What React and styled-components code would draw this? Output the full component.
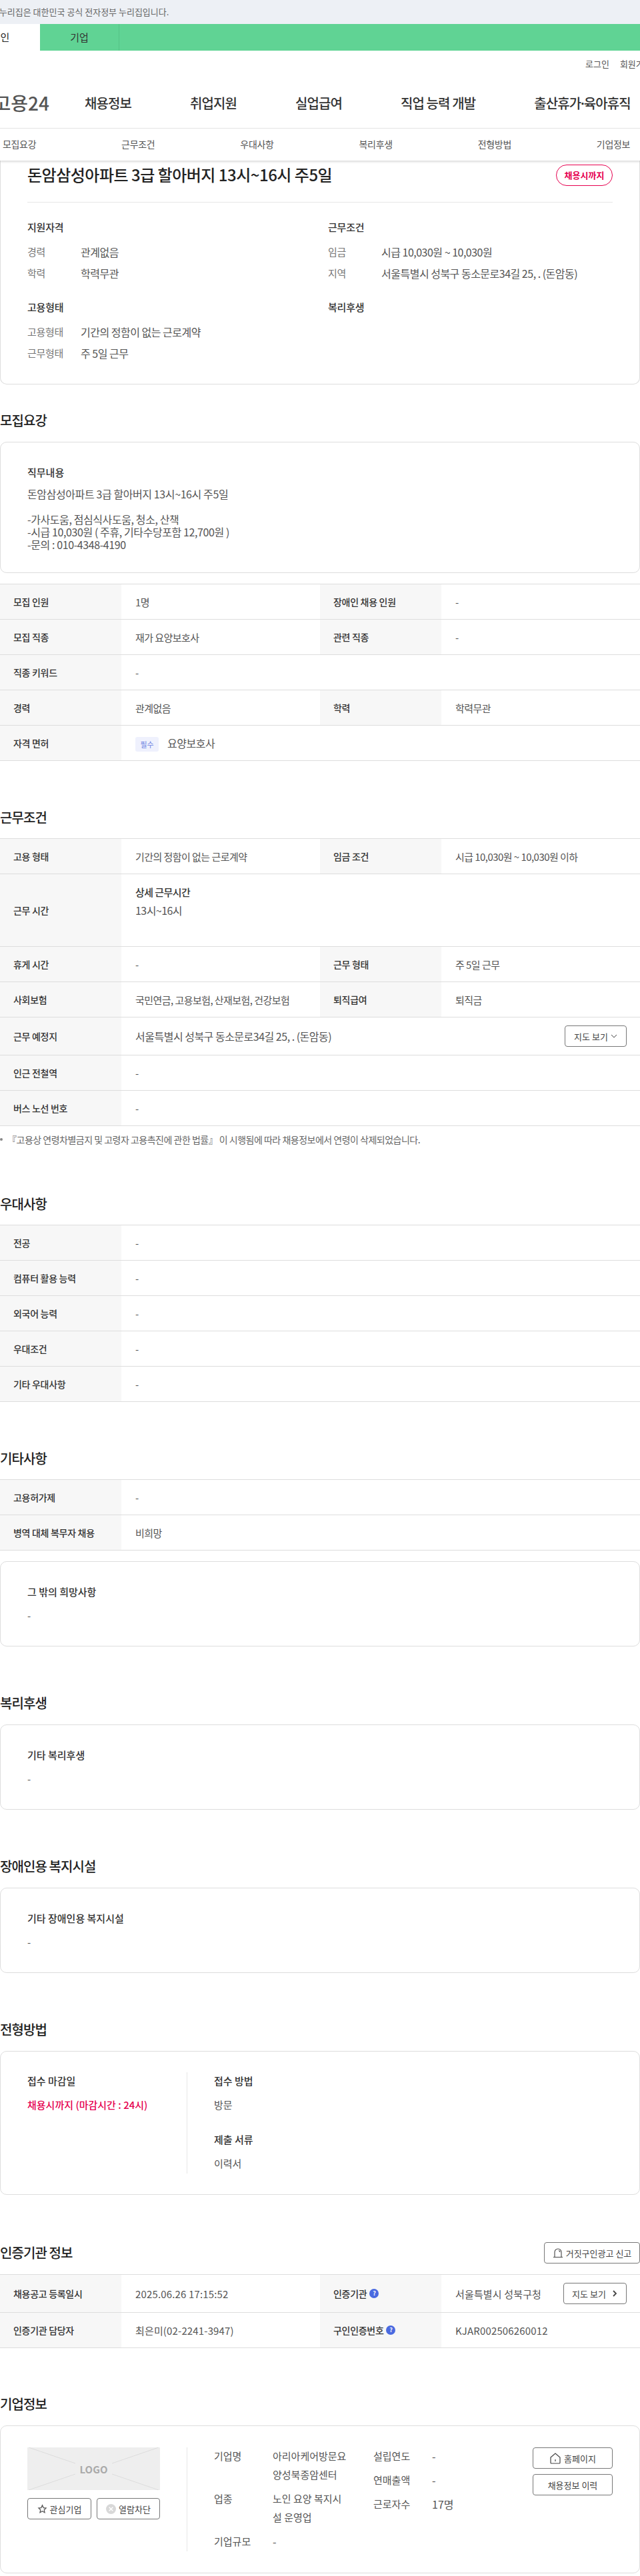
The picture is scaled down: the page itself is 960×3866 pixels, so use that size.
import React from "react";
import styled, { createGlobalStyle } from "styled-components";

const GlobalStyle = createGlobalStyle`
  html, body { margin: 0; padding: 0; background: #fff; }
  body {
    width: 960px;
    overflow-x: hidden;
    font-family: "Noto Sans CJK KR", "Noto Sans", sans-serif;
    font-size: 15px;
    color: #555;
  }
  * { box-sizing: border-box; }
`;

const Page = styled.div`
  width: 960px;
  height: 3866px;
  overflow: hidden;
`;

const GovBar = styled.div`
  height: 36px;
  line-height: 35px;
  background: #edf0f5;
  color: #666;
  font-size: 13px;
  white-space: nowrap;
  span { margin-left: -16px; }
`;

const TypeTabs = styled.div`
  display: flex;
  height: 40px;
  background: #60d394;
`;

const TypeTab = styled.div`
  flex: 0 0 119px;
  margin-left: ${(p) => (p.$active ? "-59px" : "0")};
  line-height: 40px;
  font-size: 15px;
  text-align: center;
  color: ${(p) => (p.$active ? "#222" : "#333")};
  background: ${(p) => (p.$active ? "#fff" : "transparent")};
  border-right: ${(p) => (p.$active ? "0" : "1px solid #55c486")};
`;

const UtilRow = styled.div`
  display: flex;
  gap: 16px;
  height: 40px;
  padding-left: 878px;
  line-height: 40px;
  font-size: 13px;
  white-space: nowrap;
`;

const MainNav = styled.div`
  display: flex;
  align-items: center;
  gap: 88px;
  height: 76px;
  white-space: nowrap;
`;

const Logo = styled.div`
  display: flex;
  justify-content: flex-end;
  flex: 0 0 74px;
  margin-right: -35px;
  overflow: hidden;
  font-size: 28px;
  font-weight: 500;
  color: #555;
`;

const MainLink = styled.a`
  font-size: 20px;
  font-weight: 500;
  color: #333;
  letter-spacing: -0.9px;
`;

const MidDot = styled.span`
  margin: 0 -3px;
`;

const TabShadow = styled.div`
  position: relative;
  z-index: 2;
  box-shadow: 0 2px 3px rgba(0, 0, 0, 0.14);
`;

const TabBar = styled.div`
  display: grid;
  grid-template-columns: repeat(6, 178.2px);
  width: 1070px;
  height: 49px;
  margin-left: -60px;
  background: #fff;
  border-top: 1px solid #e4e4e4;
`;

const TabLink = styled.a`
  line-height: 47px;
  text-align: center;
  font-size: 14px;
  letter-spacing: -0.3px;
  color: #555;
`;

const Card = styled.div`
  border: 1px solid #ddd;
  border-radius: 10px;
  padding: ${(p) => p.$pad || "35px 40px"};
  background: #fff;
  margin-top: ${(p) => p.$mt || "0"};
`;

const SummaryCard = styled(Card)`
  border-top: 0;
  border-radius: 0 0 10px 10px;
  padding: 6px 40px 30px;
`;

const TitleRow = styled.div`
  display: flex;
  justify-content: space-between;
  align-items: flex-start;
  padding-bottom: 24px;
  border-bottom: 1px solid #e6e6e6;
`;

const JobTitle = styled.h1`
  margin: -1px 0 0;
  font-size: 24px;
  line-height: 32px;
  font-weight: 500;
  color: #222;
  letter-spacing: -0.5px;
`;

const StatusBadge = styled.span`
  width: 85px;
  height: 32px;
  line-height: 29px;
  text-align: center;
  border: 1px solid #e6004f;
  border-radius: 16px;
  color: #e6004f;
  font-weight: 700;
  font-size: 13px;
  white-space: nowrap;
`;

const SummaryGrid = styled.div`
  display: grid;
  grid-template-columns: 451px 1fr;
  padding-top: 27px;
`;

const SummaryGroup = styled.div`
  padding-bottom: 25px;
  &:nth-last-child(-n + 2) { padding-bottom: 0; }
`;

const GroupTitle = styled.h3`
  margin: 0 0 11px;
  font-size: 15px;
  line-height: 20px;
  font-weight: 500;
  color: #333;
  letter-spacing: -0.2px;
`;

const SummaryItem = styled.div`
  display: flex;
  line-height: 32px;
  font-size: 16px;
  letter-spacing: -0.5px;
`;

const SummaryLabel = styled.span`
  flex: 0 0 80px;
  font-size: 15px;
  letter-spacing: -0.3px;
  color: #777;
`;

const Section = styled.section`
  padding-top: ${(p) => p.$pt || "72px"};
`;

const SectionHead = styled.div`
  display: flex;
  justify-content: space-between;
  align-items: center;
  height: ${(p) => p.$h || "26px"};
  margin-bottom: ${(p) => p.$mb || "19px"};
`;

const SectionTitle = styled.h2`
  margin: 0;
  font-size: 20px;
  line-height: 26px;
  font-weight: 500;
  color: #222;
  letter-spacing: -0.9px;
`;

const CardTitle = styled.h4`
  margin: 0 0 ${(p) => p.$mb || "16px"};
  font-size: 15px;
  line-height: 20px;
  font-weight: 500;
  color: #333;
`;

const CardText = styled.div`
  line-height: 20px;
`;

const JobText = styled.div`
  line-height: 19px;
  font-size: 16px;
  letter-spacing: -0.4px;
  white-space: pre-line;
`;

const Table = styled.div`
  border-top: 1px solid #ddd;
  margin-top: ${(p) => p.$mt || "0"};
  letter-spacing: ${(p) => (p.$loose ? "0.15px" : "-0.55px")};
`;

const Row = styled.div`
  display: flex;
  min-height: ${(p) => p.$h || "53px"};
  border-bottom: 1px solid #ddd;
`;

const RowLabel = styled.div`
  display: flex;
  align-items: center;
  gap: 4px;
  flex: 0 0 182px;
  padding-left: 20px;
  background: #f7f7f7;
  color: #333;
  font-size: 14px;
  font-weight: 500;
  letter-spacing: -0.3px;
`;

const RowValue = styled.div`
  display: flex;
  align-items: center;
  justify-content: space-between;
  flex: 1 1 0;
  min-width: 0;
  padding: 0 20px 0 21px;
`;

const LargeValue = styled.span`
  font-size: 16px;
  letter-spacing: -0.5px;
`;

const ValueStack = styled.div`
  display: flex;
  flex-direction: column;
  align-self: flex-start;
  padding-top: 17px;
`;

const StackTitle = styled.span`
  line-height: 20px;
  color: #333;
  font-weight: 500;
`;

const StackText = styled.span`
  margin-top: 7px;
  line-height: 20px;
  font-size: 16px;
`;

const LicenceTag = styled.span`
  display: inline-block;
  width: 35px;
  height: 22px;
  margin-right: 13px;
  line-height: 22px;
  text-align: center;
  border-radius: 3px;
  background: #eff1fd;
  color: #6b7fe0;
  font-size: 11px;
  letter-spacing: 0;
`;

const OutlineButton = styled.a`
  display: flex;
  flex: none;
  align-items: center;
  justify-content: center;
  gap: ${(p) => p.$gap || "4px"};
  width: ${(p) => p.$w || "auto"};
  height: 32px;
  border: 1px solid #777;
  border-radius: 4px;
  color: #444;
  font-size: 13px;
  letter-spacing: 0;
  white-space: nowrap;
  background: #fff;
`;

const Note = styled.p`
  display: flex;
  align-items: center;
  gap: 7px;
  margin: 10px 0 2px;
  line-height: 20px;
  font-size: 14px;
  letter-spacing: -0.5px;
  color: #666;
  white-space: nowrap;
  &::before {
    content: "";
    width: 4px;
    height: 4px;
    border-radius: 50%;
    background: #888;
  }
`;

const MethodCols = styled.div`
  display: flex;
  > div { padding-top: 3px; padding-bottom: 5px; }
`;

const MethodLeft = styled.div`
  flex: 0 0 239px;
`;

const MethodRight = styled.div`
  flex: 1;
  padding-left: 40px;
  border-left: 1px solid #e6e6e6;
`;

const MethodBlock = styled.div`
  & + & { margin-top: 32px; }
`;

const Deadline = styled.div`
  line-height: 20px;
  color: #e6004f;
  font-weight: 500;
`;

const HelpDot = styled.span`
  width: 14px;
  height: 14px;
  line-height: 14px;
  text-align: center;
  border-radius: 50%;
  background: #4a6ae0;
  color: #fff;
  font-size: 9px;
  font-weight: 700;
`;

const CompanyCols = styled.div`
  display: flex;
`;

const LogoCol = styled.div`
  flex: 0 0 239px;
  padding-right: 40px;
`;

const LogoBox = styled.div`
  position: relative;
  display: flex;
  align-items: center;
  justify-content: center;
  height: 64px;
  background: #eee;
  color: #aaa;
  font-size: 15px;
  font-weight: 700;
  svg { position: absolute; inset: 0; }
`;

const LogoActions = styled.div`
  display: grid;
  grid-template-columns: 96px 95px;
  justify-content: space-between;
  margin-top: 12px;
`;

const InfoCols = styled.div`
  flex: 1;
  display: flex;
  padding-left: 40px;
  border-left: 1px solid #e6e6e6;
  height: 156px;
`;

const InfoCol = styled.div`
  flex: 0 0 239px;
  display: flex;
  flex-direction: column;
  gap: 8px;
  margin-top: -1px;
`;

const InfoItem = styled.div`
  display: flex;
  line-height: 28px;
`;

const InfoLabel = styled.span`
  flex: 0 0 88px;
`;

const InfoValue = styled.span`
  width: 113px;
  word-break: break-all;
  font-size: ${(p) => (p.$big ? "16px" : "15px")};
`;

const CompanyActions = styled.div`
  display: flex;
  flex-direction: column;
  gap: 8px;
  width: 120px;
`;

const Star = () => (
  <svg width="15" height="15" viewBox="0 0 24 24" fill="none" stroke="#555" strokeWidth="2">
    <path d="M12 3l2.7 5.9 6.3.8-4.6 4.4 1.2 6.4L12 17.3l-5.6 3.2 1.2-6.4L3 9.7l6.3-.8z" />
  </svg>
);

const BlockIcon = () => (
  <svg width="15" height="15" viewBox="0 0 24 24">
    <circle cx="12" cy="12" r="12" fill="#d8d8d8" />
    <path d="M7.5 7.5l9 9m0-9l-9 9" stroke="#fff" strokeWidth="2.4" />
  </svg>
);

const Siren = () => (
  <svg width="16" height="16" viewBox="0 0 16 16" fill="none" stroke="#444" strokeWidth="1.1">
    <path d="M3 14V7a5 5 0 0 1 10 0v7M1 14.5h14M9 4.5a3 3 0 0 1 2 2.5" />
  </svg>
);

const Home = () => (
  <svg width="18" height="18" viewBox="0 0 18 18" fill="none" stroke="#444" strokeWidth="1.2">
    <path d="M2 8l7-6 7 6v8a1 1 0 0 1-1 1H3a1 1 0 0 1-1-1z" />
    <path d="M9 11v3" />
  </svg>
);

const Chevron = ({ dir }) => (
  <svg width="10" height="10" viewBox="0 0 10 10" fill="none" stroke="#444" strokeWidth={dir === "down" ? 1 : 1.8}>
    <path d={dir === "down" ? "M1 3l4 4 4-4" : "M3 1l4 4-4 4"} />
  </svg>
);

const Cells = ({ items }) =>
  items.map(([label, value]) => (
    <React.Fragment key={label}>
      <RowLabel>{label}</RowLabel>
      <RowValue>{value}</RowValue>
    </React.Fragment>
  ));

const SimpleTable = ({ rows, mt }) => (
  <Table $mt={mt}>
    {rows.map((items) => (
      <Row key={items[0][0]}>
        <Cells items={items} />
      </Row>
    ))}
  </Table>
);

const recruitRows = [
  [["모집 인원", "1명"], ["장애인 채용 인원", "-"]],
  [["모집 직종", "재가 요양보호사"], ["관련 직종", "-"]],
  [["직종 키워드", "-"]],
  [["경력", "관계없음"], ["학력", "학력무관"]],
  [["자격 면허", <LargeValue key="l"><LicenceTag>필수</LicenceTag>요양보호사</LargeValue>]],
];

const preferRows = [
  [["전공", "-"]],
  [["컴퓨터 활용 능력", "-"]],
  [["외국어 능력", "-"]],
  [["우대조건", "-"]],
  [["기타 우대사항", "-"]],
];

const etcRows = [
  [["고용허가제", "-"]],
  [["병역 대체 복무자 채용", "비희망"]],
];

const navItems = ["채용정보", "취업지원", "실업급여", "직업 능력 개발"];
const tabItems = ["모집요강", "근무조건", "우대사항", "복리후생", "전형방법", "기업정보"];

export default function App() {
  return (
    <Page>
      <GlobalStyle />
      <GovBar><span>이 누리집은 대한민국 공식 전자정부 누리집입니다.</span></GovBar>
      <TypeTabs>
        <TypeTab $active>개인</TypeTab>
        <TypeTab>기업</TypeTab>
      </TypeTabs>
      <UtilRow><span>로그인</span><span>회원가입</span></UtilRow>
      <MainNav>
        <Logo>고용24</Logo>
        {navItems.map((n) => <MainLink key={n}>{n}</MainLink>)}
        <MainLink>출산휴가<MidDot>·</MidDot>육아휴직</MainLink>
      </MainNav>
      <TabShadow>
        <TabBar>
          {tabItems.map((t) => <TabLink key={t}>{t}</TabLink>)}
        </TabBar>
      </TabShadow>

      <SummaryCard>
        <TitleRow>
          <JobTitle>돈암삼성아파트 3급 할아버지 13시~16시 주5일</JobTitle>
          <StatusBadge>채용시까지</StatusBadge>
        </TitleRow>
        <SummaryGrid>
          <SummaryGroup>
            <GroupTitle>지원자격</GroupTitle>
            <SummaryItem><SummaryLabel>경력</SummaryLabel>관계없음</SummaryItem>
            <SummaryItem><SummaryLabel>학력</SummaryLabel>학력무관</SummaryItem>
          </SummaryGroup>
          <SummaryGroup>
            <GroupTitle>근무조건</GroupTitle>
            <SummaryItem><SummaryLabel>임금</SummaryLabel>시급 10,030원 ~ 10,030원</SummaryItem>
            <SummaryItem><SummaryLabel>지역</SummaryLabel>서울특별시 성북구 동소문로34길 25, . (돈암동)</SummaryItem>
          </SummaryGroup>
          <SummaryGroup>
            <GroupTitle>고용형태</GroupTitle>
            <SummaryItem><SummaryLabel>고용형태</SummaryLabel>기간의 정함이 없는 근로계약</SummaryItem>
            <SummaryItem><SummaryLabel>근무형태</SummaryLabel>주 5일 근무</SummaryItem>
          </SummaryGroup>
          <SummaryGroup>
            <GroupTitle>복리후생</GroupTitle>
          </SummaryGroup>
        </SummaryGrid>
      </SummaryCard>

      <Section $pt="41px">
        <SectionHead><SectionTitle>모집요강</SectionTitle></SectionHead>
        <Card $pad="35px 40px 32px">
          <CardTitle $mb="13px">직무내용</CardTitle>
          <JobText>{"돈암삼성아파트 3급 할아버지 13시~16시 주5일\n\n-가사도움, 점심식사도움, 청소, 산책\n-시급 10,030원 ( 주휴, 기타수당포함 12,700원 )\n-문의 : 010-4348-4190"}</JobText>
        </Card>
        <SimpleTable rows={recruitRows} mt="16px" />
      </Section>

      <Section>
        <SectionHead $mb="18px"><SectionTitle>근무조건</SectionTitle></SectionHead>
        <Table>
          <Row><Cells items={[["고용 형태", "기간의 정함이 없는 근로계약"], ["임금 조건", "시급 10,030원 ~ 10,030원 이하"]]} /></Row>
          <Row $h="109px">
            <RowLabel>근무 시간</RowLabel>
            <RowValue>
              <ValueStack>
                <StackTitle>상세 근무시간</StackTitle>
                <StackText>13시~16시</StackText>
              </ValueStack>
            </RowValue>
          </Row>
          <Row><Cells items={[["휴게 시간", "-"], ["근무 형태", "주 5일 근무"]]} /></Row>
          <Row><Cells items={[["사회보험", "국민연금, 고용보험, 산재보험, 건강보험"], ["퇴직급여", "퇴직금"]]} /></Row>
          <Row $h="57px">
            <RowLabel>근무 예정지</RowLabel>
            <RowValue>
              <LargeValue>서울특별시 성북구 동소문로34길 25, . (돈암동)</LargeValue>
              <OutlineButton $w="93px">지도 보기 <Chevron dir="down" /></OutlineButton>
            </RowValue>
          </Row>
          <Row><Cells items={[["인근 전철역", "-"]]} /></Row>
          <Row><Cells items={[["버스 노선 번호", "-"]]} /></Row>
        </Table>
        <Note>『고용상 연령차별금지 및 고령자 고용촉진에 관한 법률』 이 시행됨에 따라 채용정보에서 연령이 삭제되었습니다.</Note>
      </Section>

      <Section>
        <SectionHead $mb="18px"><SectionTitle>우대사항</SectionTitle></SectionHead>
        <SimpleTable rows={preferRows} />
      </Section>

      <Section>
        <SectionHead $mb="18px"><SectionTitle>기타사항</SectionTitle></SectionHead>
        <SimpleTable rows={etcRows} />
        <Card $mt="16px">
          <CardTitle>그 밖의 희망사항</CardTitle>
          <CardText>-</CardText>
        </Card>
      </Section>

      <Section>
        <SectionHead><SectionTitle>복리후생</SectionTitle></SectionHead>
        <Card>
          <CardTitle>기타 복리후생</CardTitle>
          <CardText>-</CardText>
        </Card>
      </Section>

      <Section>
        <SectionHead><SectionTitle>장애인용 복지시설</SectionTitle></SectionHead>
        <Card>
          <CardTitle>기타 장애인용 복지시설</CardTitle>
          <CardText>-</CardText>
        </Card>
      </Section>

      <Section>
        <SectionHead><SectionTitle>전형방법</SectionTitle></SectionHead>
        <Card $pad="31px 40px">
          <MethodCols>
            <MethodLeft>
              <CardTitle>접수 마감일</CardTitle>
              <Deadline>채용시까지 (마감시간 : 24시)</Deadline>
            </MethodLeft>
            <MethodRight>
              <MethodBlock>
                <CardTitle>접수 방법</CardTitle>
                <CardText>방문</CardText>
              </MethodBlock>
              <MethodBlock>
                <CardTitle>제출 서류</CardTitle>
                <CardText>이력서</CardText>
              </MethodBlock>
            </MethodRight>
          </MethodCols>
        </Card>
      </Section>

      <Section>
        <SectionHead $h="30px" $mb="17px">
          <SectionTitle>인증기관 정보</SectionTitle>
          <OutlineButton $w="144px"><Siren /> 거짓구인광고 신고</OutlineButton>
        </SectionHead>
        <Table $loose>
          <Row $h="57px">
            <RowLabel>채용공고 등록일시</RowLabel>
            <RowValue>2025.06.26 17:15:52</RowValue>
            <RowLabel>인증기관 <HelpDot>?</HelpDot></RowLabel>
            <RowValue>
              서울특별시 성북구청
              <OutlineButton $w="95px" $gap="8px">지도 보기 <Chevron dir="right" /></OutlineButton>
            </RowValue>
          </Row>
          <Row>
            <RowLabel>인증기관 담당자</RowLabel>
            <RowValue>최은미(02-2241-3947)</RowValue>
            <RowLabel>구인인증번호 <HelpDot>?</HelpDot></RowLabel>
            <RowValue>KJAR002506260012</RowValue>
          </Row>
        </Table>
      </Section>

      <Section $pt="71px">
        <SectionHead><SectionTitle>기업정보</SectionTitle></SectionHead>
        <Card $pad="32px 40px">
          <CompanyCols>
            <LogoCol>
              <LogoBox>
                <svg width="199" height="64" viewBox="0 0 199 64" stroke="#dcdcdc" strokeWidth="1">
                  <path d="M2 0l70 24M2 64l70-24M127 24l70-24M127 40l70 24" />
                </svg>
                LOGO
              </LogoBox>
              <LogoActions>
                <OutlineButton><Star /> 관심기업</OutlineButton>
                <OutlineButton><BlockIcon /> 열람차단</OutlineButton>
              </LogoActions>
            </LogoCol>
            <InfoCols>
              <InfoCol>
                <InfoItem><InfoLabel>기업명</InfoLabel><InfoValue>아리아케어방문요양성북종암센터</InfoValue></InfoItem>
                <InfoItem><InfoLabel>업종</InfoLabel><InfoValue>노인 요양 복지시설 운영업</InfoValue></InfoItem>
                <InfoItem><InfoLabel>기업규모</InfoLabel><InfoValue $big>-</InfoValue></InfoItem>
              </InfoCol>
              <InfoCol>
                <InfoItem><InfoLabel>설립연도</InfoLabel><InfoValue $big>-</InfoValue></InfoItem>
                <InfoItem><InfoLabel>연매출액</InfoLabel><InfoValue $big>-</InfoValue></InfoItem>
                <InfoItem><InfoLabel>근로자수</InfoLabel><InfoValue $big>17명</InfoValue></InfoItem>
              </InfoCol>
              <CompanyActions>
                <OutlineButton><Home /> 홈페이지</OutlineButton>
                <OutlineButton>채용정보 이력</OutlineButton>
              </CompanyActions>
            </InfoCols>
          </CompanyCols>
        </Card>
      </Section>
    </Page>
  );
}
